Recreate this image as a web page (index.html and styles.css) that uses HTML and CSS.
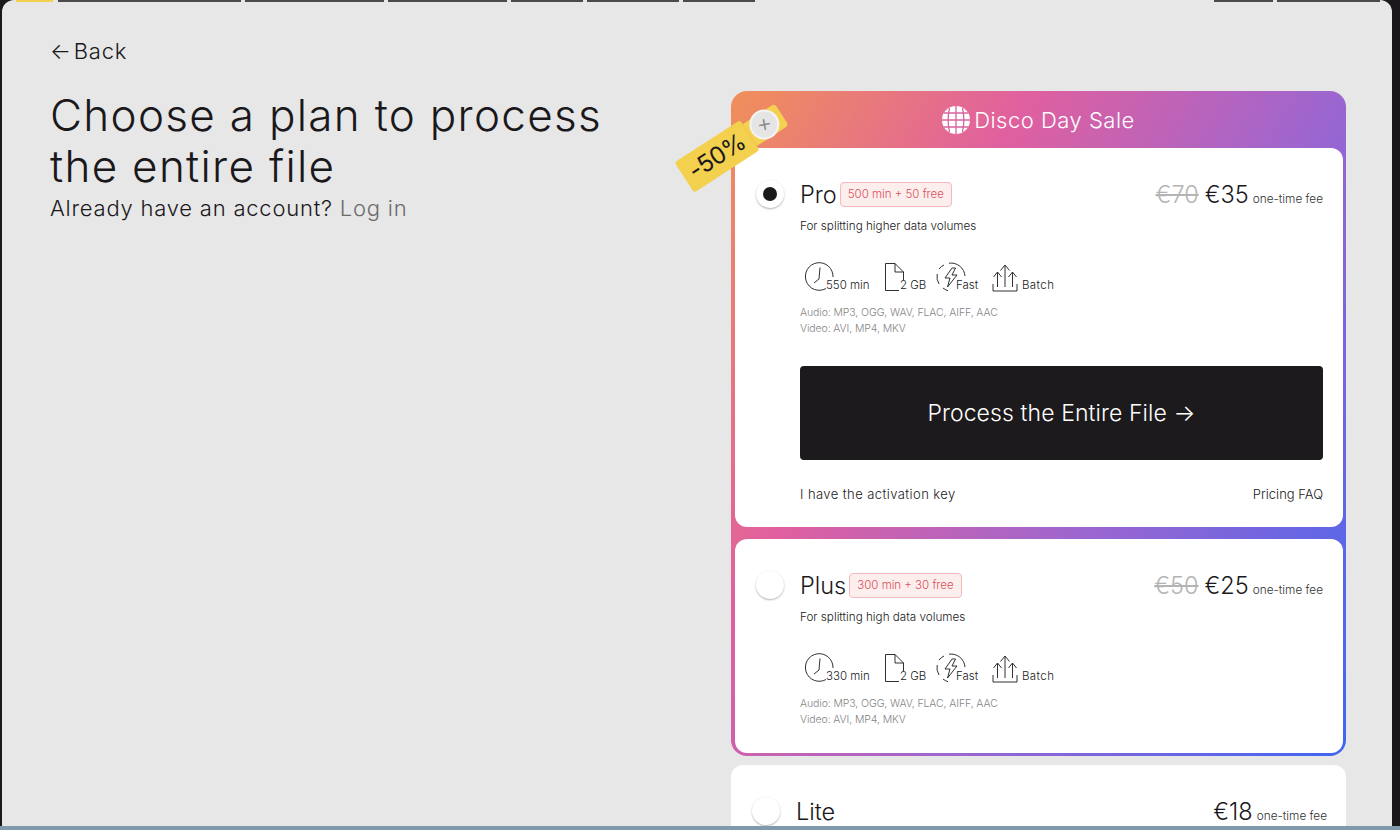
FILE: index.html
```html
<!DOCTYPE html>
<html lang="en">
<head>
<meta charset="utf-8">
<title>Choose a plan</title>
<link rel="stylesheet" href="styles.css">
</head>
<body>
<svg class="defs" width="0" height="0" aria-hidden="true">
  <symbol id="i-clock" viewBox="0 0 30 30"><path d="M22 26.500A13.800 13.800 0 1 1 29 15" fill="none" stroke="currentColor" stroke-width=".9"/><path d="M16 5.500 15 17 10 21" fill="none" stroke="currentColor" stroke-width=".9"/></symbol>
  <symbol id="i-doc" viewBox="0 0 22 30"><path d="M15 28.500H1.500V1.500H11L19.500 10V18M11 1.500V10H19.500" fill="none" stroke="currentColor" stroke-width=".9"/></symbol>
  <symbol id="i-bolt" viewBox="0 0 30 30"><path d="M13 1.200A14 14 0 0 1 29 14M8 3A14 14 0 0 0 3 7M1.200 12A14 14 0 0 0 3 22M7 26A14 14 0 0 0 12 28.700" fill="none" stroke="currentColor" stroke-width=".9"/><path d="M16 6 9 16H14L11.500 25 21 13H16L19.500 6Z" fill="none" stroke="currentColor" stroke-width=".9"/></symbol>
  <symbol id="i-batch" viewBox="0 0 26 28"><path d="M1 20V27H25V20M13 23V1.500M8.500 6.500 13 1 17.500 6.500M5.500 23V8.500M1.500 13 5.500 8 9.500 13M20.500 23V8.500M16.500 13 20.500 8 24.500 13" fill="none" stroke="currentColor" stroke-width=".9"/></symbol>
</svg>
<div class="window">
  <main class="panel">
    <div class="steps">
      <span class="step step-active s1"></span><span class="step s2"></span><span class="step s3"></span><span class="step s4"></span><span class="step s5"></span><span class="step s6"></span><span class="step s7"></span>
      <span class="step s8"></span><span class="step s9"></span>
    </div>
    <div class="content">
      <section class="intro">
        <a class="back">← Back</a>
        <h1>Choose a plan to process the entire file</h1>
        <p class="login">Already have an account? <a>Log in</a></p>
      </section>
      <section class="plans">
        <div class="sale">
          <div class="tag">
            <span class="tag-main">-50%</span><span class="tag-tab"></span>
            <span class="tag-close">+</span>
          </div>
          <div class="sale-title">
            <svg class="globe" viewBox="0 0 30 30" aria-hidden="true"><circle cx="15" cy="15" r="14" fill="#fff"/><path d="M15 1V29M8.500 3C7 10 7 20 8.500 27M21.500 3C23 10 23 20 21.500 27M3 8H27M1 15H29M3 22H27" fill="none" stroke="#d9639f" stroke-width="1.300"/></svg>
            <span>Disco Day Sale</span>
          </div>
          <article class="card card-pro">
            <div class="card-head">
              <span class="radio radio-on"></span>
              <span class="plan-name">Pro</span>
              <span class="badge">500 min + 50 free</span>
              <span class="price"><s>€70</s> <b>€35</b> <small>one-time fee</small></span>
            </div>
            <div class="card-body">
              <p class="desc">For splitting higher data volumes</p>
              <div class="features">
                <span class="feat f-time"><svg class="ic-30"><use href="#i-clock"/></svg><em>550 min</em></span>
                <span class="feat f-size"><svg class="ic-doc"><use href="#i-doc"/></svg><em>2 GB</em></span>
                <span class="feat f-fast"><svg class="ic-30"><use href="#i-bolt"/></svg><em>Fast</em></span>
                <span class="feat f-batch"><svg class="ic-batch"><use href="#i-batch"/></svg><em>Batch</em></span>
              </div>
              <p class="formats">Audio: MP3, OGG, WAV, FLAC, AIFF, AAC<br>Video: AVI, MP4, MKV</p>
              <button class="cta">Process the Entire File →</button>
              <div class="card-foot"><a class="key-link">I have the activation key</a><a>Pricing FAQ</a></div>
            </div>
          </article>
          <article class="card card-plus">
            <div class="card-head">
              <span class="radio"></span>
              <span class="plan-name">Plus</span>
              <span class="badge">300 min + 30 free</span>
              <span class="price"><s>€50</s> <b>€25</b> <small>one-time fee</small></span>
            </div>
            <div class="card-body">
              <p class="desc">For splitting high data volumes</p>
              <div class="features">
                <span class="feat f-time"><svg class="ic-30"><use href="#i-clock"/></svg><em>330 min</em></span>
                <span class="feat f-size"><svg class="ic-doc"><use href="#i-doc"/></svg><em>2 GB</em></span>
                <span class="feat f-fast"><svg class="ic-30"><use href="#i-bolt"/></svg><em>Fast</em></span>
                <span class="feat f-batch"><svg class="ic-batch"><use href="#i-batch"/></svg><em>Batch</em></span>
              </div>
              <p class="formats">Audio: MP3, OGG, WAV, FLAC, AIFF, AAC<br>Video: AVI, MP4, MKV</p>
            </div>
          </article>
        </div>
        <article class="card card-lite">
          <div class="card-head">
            <span class="radio"></span>
            <span class="plan-name">Lite</span>
            <span class="price"><b>€18</b> <small>one-time fee</small></span>
          </div>
        </article>
      </section>
    </div>
  </main>
</div>
<div class="dock"></div>
</body>
</html>
```
FILE: styles.css
```css
* { box-sizing: border-box; }
html, body { margin: 0; height: 830px; overflow: hidden; }
body {
  display: flex;
  flex-direction: column;
  background: #1a181a;
  color: #1a181b;
  font-family: Inter, "Liberation Sans", sans-serif;
  font-weight: 300;
}
.defs { position: absolute; }
.window { flex: 1; min-height: 0; padding: 0 8px 0 2px; display: flex; }
.panel {
  flex: 1;
  min-width: 0;
  background: #e7e7e7;
  border-radius: 12px 12px 0 0;
  overflow: hidden;
}
.dock { height: 4px; background: #7f9aab; }

.steps { display: flex; gap: 4px; height: 2px; padding-left: 14px; }
.step { height: 2px; background: #4a4a4a; }
.step-active { background: #f3cf4d; }
.s1 { width: 37px; margin-right: 1px; }
.s2 { width: 183px; }
.s3 { width: 139px; }
.s4 { width: 119px; }
.s5 { width: 72px; }
.s6 { width: 92px; }
.s7 { width: 72px; margin-right: auto; }
.s8 { width: 59px; }
.s9 { width: 103px; margin-right: 12px; }

.content { display: flex; padding: 0 46px 0 48px; justify-content: space-between; }
.intro { width: 580px; padding-top: 35px; }
.back { display: block; font-size: 22px; line-height: 28px; letter-spacing: 0.8px; word-spacing: -5px; }
h1 { margin: 25px 0 0; font-size: 44px; line-height: 51px; font-weight: 300; letter-spacing: 1.3px; }
.login { margin: 1px 0 0; font-size: 22px; line-height: 30px; letter-spacing: 0.78px; }
.login a { color: #6b6b6b; }

.plans { width: 615px; padding-top: 89px; }
.sale {
  position: relative;
  padding: 0 3px 3px 4px;
  border-radius: 16px;
  background: linear-gradient(120deg, #f0905a 0%, #e0609f 30%, #9c66d0 61%, #3f66f2 100%);
}
.sale-title {
  height: 57px;
  display: flex;
  align-items: center;
  justify-content: center;
  gap: 3px;
  color: #fff;
  font-size: 22px;
  letter-spacing: 0.5px;
  padding-right: 2px;
}
.globe { width: 30px; height: 30px; }

.tag { position: absolute; left: -56px; top: 37px; width: 116px; height: 36px; display: flex; align-items: center; transform: rotate(-33deg); }
.tag-main { width: 78px; height: 36px; background: #f3d04e; border-radius: 3px; text-align: center; font-size: 24px; line-height: 36px; font-weight: 400; letter-spacing: -0.5px; }
.tag-tab { flex: 1; height: 26px; background: #f3d04e; border-radius: 0 4px 4px 0; }
.tag-close {
  position: absolute;
  left: 81px;
  top: 2px;
  width: 30px;
  height: 30px;
  border-radius: 50%;
  background: #e5e5e5;
  border: 2px solid #f4f4f4;
  color: #888;
  font-size: 24px;
  line-height: 24px;
  text-align: center;
  transform: rotate(22deg);
}

.card { background: #fff; border-radius: 12px; padding: 31px 20px 0; }
.card + .card { margin-top: 12px; }
.card-pro { height: 379px; }
.card-plus { height: 214px; padding-top: 31px; }
.card-lite { margin-top: 9px; padding: 31px 19px 0 20px; height: 80px; }

.card-head { display: flex; align-items: center; height: 30px; }
.radio {
  flex: none;
  width: 28px;
  height: 28px;
  margin: 0 16px 0 1px;
  border-radius: 50%;
  background: #fff;
  box-shadow: 0 1px 2px rgba(0, 0, 0, 0.3);
  display: flex;
  align-items: center;
  justify-content: center;
}
.radio-on::after { content: ""; width: 14px; height: 14px; border-radius: 50%; background: #1a181b; }
.plan-name { font-size: 23.500px; margin-right: 3px; }
.badge {
  font-size: 11.500px;
  line-height: 23px;
  padding: 0 7px;
  color: #d9505a;
  background: #fdeeee;
  border: 1px solid #f3b9bd;
  border-radius: 4px;
  margin-top: 1px;
}
.price { margin-left: auto; white-space: nowrap; display: flex; align-items: baseline; gap: 4px; }
.price s { font-size: 23.500px; color: #b4b4b4; margin-right: 2px; }
.price b { font-size: 23.500px; font-weight: 300; }
.price small { font-size: 11.800px; color: #333; }

.card-body { padding-left: 45px; }
.desc { margin: 9px 0 0; font-size: 11.700px; line-height: 16px; }
.features { display: flex; padding-left: 4px; margin-top: 28px; height: 30px; align-items: flex-end; }
.feat { display: flex; align-items: flex-end; }
.feat em { font-style: normal; font-size: 11.500px; line-height: 14px; white-space: nowrap; }
.ic-30 { width: 30px; height: 30px; }
.ic-doc { width: 22px; height: 30px; }
.ic-batch { width: 26px; height: 28px; }
.f-time { width: 81px; }
.f-time em { margin-left: -8px; }
.f-size { width: 51px; margin-left: -1px; }
.f-size em { margin-left: -6px; }
.f-fast { width: 56px; margin-left: 1px; }
.f-fast em { margin-left: -10px; }
.f-batch em { margin-left: 4px; letter-spacing: 0.4px; }
.formats { margin: 13px 0 0; font-size: 10.500px; line-height: 16px; letter-spacing: -0.1px; color: #858585; }
.cta {
  display: block;
  width: 100%;
  height: 94px;
  margin-top: 29px;
  background: #1c1a1c;
  color: #fff;
  border: 0;
  border-radius: 4px;
  font: inherit;
  font-size: 23px;
  letter-spacing: 0.1px;
}
.card-foot { display: flex; justify-content: space-between; margin-top: 25px; font-size: 13px; line-height: 18px; }
.key-link { letter-spacing: 0.42px; }
```
